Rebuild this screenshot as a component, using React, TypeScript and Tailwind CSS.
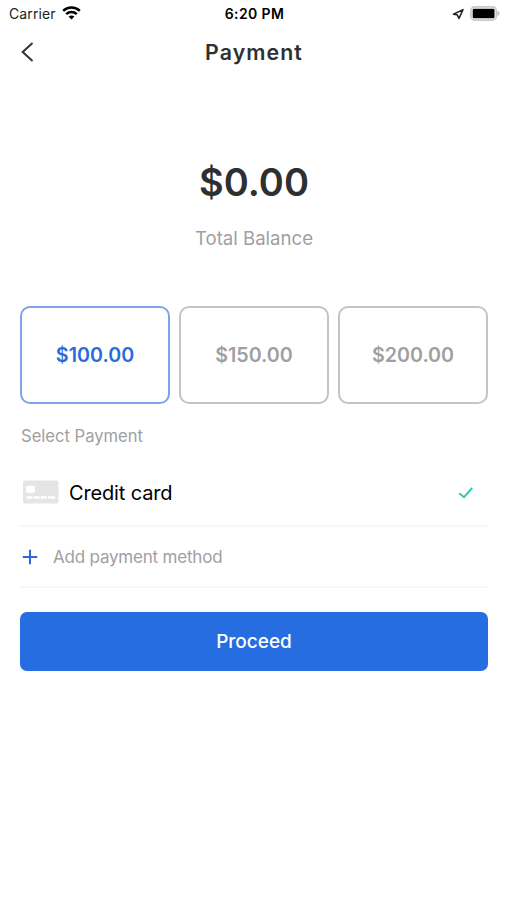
import { useState } from "react";

const AMOUNTS = ["$100.00", "$150.00", "$200.00"];

function StatusBar() {
  return (
    <div className="grid h-[27px] grid-cols-3 items-center pl-[9px] pr-[7px] text-black">
      <div className="flex items-center gap-[6px]">
        <span className="text-[14px] tracking-[0.1px] text-[#222222]">Carrier</span>
        <svg width="19" height="14" viewBox="0 0 19 14" fill="none" stroke="currentColor" className="mb-px" aria-hidden>
          <path d="M1.2 4.9C5.8 0.4 13.2 0.4 17.8 4.9" strokeWidth="2.5" />
          <path d="M4.2 8.1C7.1 5.3 11.9 5.3 14.8 8.1" strokeWidth="2.4" />
          <path d="M9.5 13.6L6.6 10.6C8.2 9.1 10.8 9.1 12.4 10.6Z" fill="currentColor" stroke="none" />
        </svg>
      </div>
      <span className="text-center text-[14px] font-semibold tracking-[0.4px]">6:20 PM</span>
      <div className="flex items-center justify-end gap-[6px]">
        <svg width="12" height="12" viewBox="0 0 12 12" fill="none" stroke="#222222" strokeWidth="1.5" strokeLinejoin="round" aria-hidden>
          <path d="M11 1.6L1.4 6.2L5.2 6.8L7 10.4Z" />
        </svg>
        <svg width="30" height="15" viewBox="0 0 30 15" aria-hidden>
          <rect x="0.9" y="0.9" width="25.4" height="13.2" rx="3.8" fill="#ffffff" stroke="#c8c8c8" strokeWidth="1.7" />
          <rect x="2.7" y="2.7" width="21.8" height="9.6" rx="1.2" fill="#000000" />
          <path d="M27.4 4.8C30.2 6 30.2 9 27.4 10.2Z" fill="#bdbdbd" />
        </svg>
      </div>
    </div>
  );
}

function CardIcon() {
  return (
    <svg width="36" height="24" viewBox="0 0 36 24" className="mb-px" aria-hidden>
      <rect x="0" y="0.5" width="35.5" height="23" rx="2" fill="#e5e5e5" />
      <rect x="3" y="5.8" width="9" height="7" rx="1.5" fill="#ffffff" />
      <path d="M3.5 17.5H9.5M10.7 17.5H16.5M17.7 17.5H23.8M25 17.5H32" stroke="#ffffff" strokeWidth="2.4" />
    </svg>
  );
}

export default function App() {
  const [selected, setSelected] = useState(0);

  return (
    <div className="flex h-[900px] w-[507px] flex-col bg-white font-['Inter','Liberation_Sans',sans-serif]">
      <StatusBar />

      <header className="grid h-[50px] grid-cols-[40px_1fr_40px] items-center">
        <button type="button" aria-label="Back" className="pl-[21px]">
          <svg width="13" height="20" viewBox="0 0 13 20" fill="none" stroke="#333333" strokeWidth="2" aria-hidden>
            <path d="M11.5 1L1.7 10L11.5 19" />
          </svg>
        </button>
        <h1 className="pl-px pt-px text-center text-[21.3px] font-semibold tracking-[1.1px] text-[#2e3033]">Payment</h1>
      </header>

      <main className="flex flex-col pl-5 pr-[19px]">
        <section className="mt-[81px] flex flex-col items-center">
          <p className="text-[38px] font-semibold leading-[48px] text-[#2e2f31]">$0.00</p>
          <p className="mt-5 text-[18.6px] leading-6 text-[#a0a0a0]">Total Balance</p>
        </section>

        <div className="mt-14 grid grid-cols-3 gap-[9px]">
          {AMOUNTS.map((amount, i) => (
            <button
              key={amount}
              type="button"
              onClick={() => setSelected(i)}
              className={`h-[98px] rounded-[10px] border-2 pt-[2px] text-[19.7px] font-semibold ${
                selected === i
                  ? "border-[#7ca4ea] text-[#2a6bdb]"
                  : "border-[#c4c4c4] text-[#9f9f9f]"
              }`}
            >
              {amount}
            </button>
          ))}
        </div>

        <h2 className="mt-5 pl-px text-[16.6px] leading-6 text-[#a0a0a0]">Select Payment</h2>

        <div className="mt-3 flex h-[67px] items-center border-b-2 border-[#f8f8f8] pl-[3px] pr-[14px]">
          <CardIcon />
          <span className="ml-[10px] flex-1 text-[20px] tracking-[-0.15px] text-black">Credit card</span>
          <svg width="16" height="14" viewBox="0 0 16 14" fill="none" stroke="#2acdb2" strokeWidth="2" aria-hidden>
            <path d="M1.2 7.2L6 11.2L14.2 2" />
          </svg>
        </div>

        <button type="button" className="flex h-[61px] items-center border-b-2 border-[#f8f8f8] pl-[2px] text-left">
          <svg width="16" height="16" viewBox="0 0 16 16" fill="none" stroke="#2a6bdb" strokeWidth="2" aria-hidden>
            <path d="M8 0.8V15.2M0.8 8H15.2" />
          </svg>
          <span className="ml-[15px] pt-[2px] text-[17px] tracking-[-0.2px] text-[#a0a0a0]">Add payment method</span>
        </button>

        <button type="button" className="mt-6 h-[59px] rounded-[7px] bg-[#266de2] pt-[2px] text-[19px] font-medium text-white">
          Proceed
        </button>
      </main>
    </div>
  );
}
